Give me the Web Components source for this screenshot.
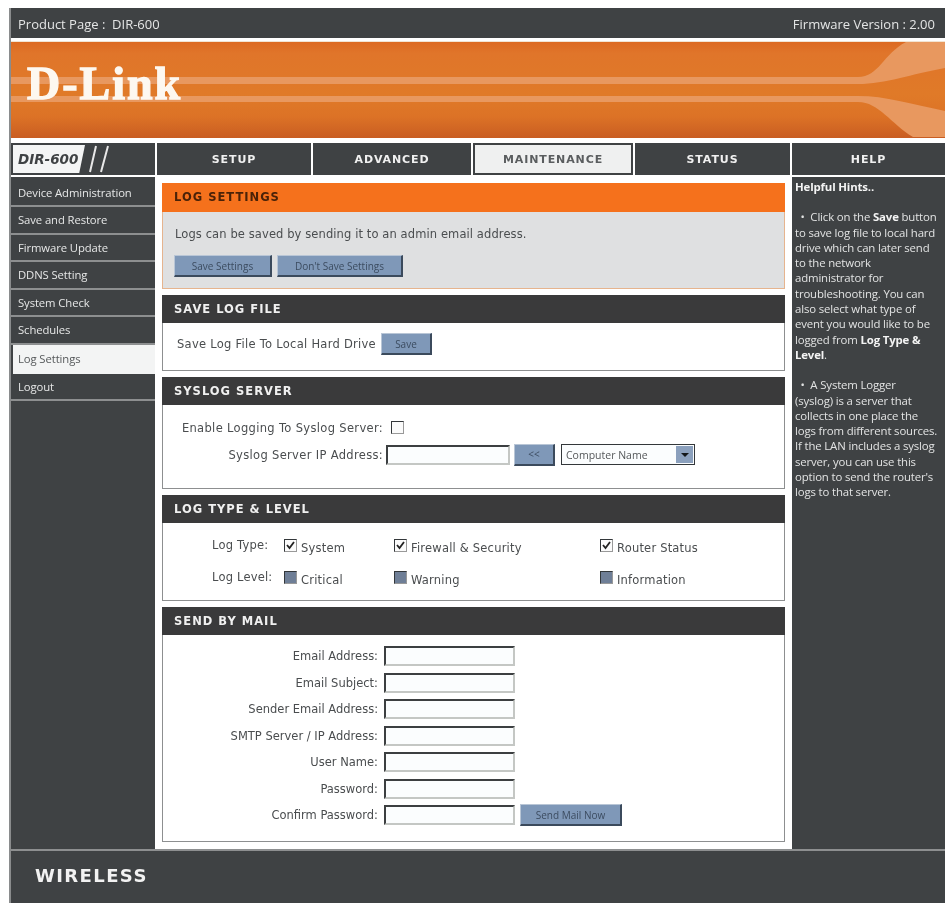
<!DOCTYPE html>
<html>
<head>
<meta charset="utf-8">
<title>D-Link DIR-600</title>
<style>
    html, body { margin: 0; padding: 0; background: #fff; }
    body { font-family: "DejaVu Sans", sans-serif; }
</style>
</head>
<body>
<dl-page>
    <dl-topbar slot="top" product="Product Page :  DIR-600" firmware="Firmware Version : 2.00"></dl-topbar>
    <dl-banner slot="top"></dl-banner>
    <dl-tabs slot="top" active="MAINTENANCE"></dl-tabs>

    <dl-sidenav slot="nav" active="Log Settings"></dl-sidenav>

    <dl-card title="LOG SETTINGS" tone="orange" height="106">
        <div style="font:11.5px 'DejaVu Sans',sans-serif;color:#4a4d4f;padding:15px 0 0 12px;letter-spacing:.1px">Logs can be saved by sending it to an admin email address.</div>
        <div style="display:flex;gap:5px;padding:14px 0 0 11px">
            <dl-button width="98">Save Settings</dl-button>
            <dl-button width="126">Don't Save Settings</dl-button>
        </div>
    </dl-card>

    <dl-card title="SAVE LOG FILE" height="76">
        <div style="display:flex;align-items:center;gap:5px;padding:10px 0 0 14px;font-size:11.5px;color:#4a4d4f;letter-spacing:.27px">
            <span>Save Log File To Local Hard Drive</span>
            <dl-button width="51">Save</dl-button>
        </div>
    </dl-card>

    <dl-card title="SYSLOG SERVER" height="112">
        <div style="padding-top:11px">
            <dl-field label="Enable Logging To Syslog Server:" label-width="223" height="23" style="letter-spacing:.33px"><dl-check style="margin-left:5px"></dl-check></dl-field>
            <dl-field label="Syslog Server IP Address:" label-width="223" height="31" style="letter-spacing:.33px">
                <dl-input width="124"></dl-input>
                <dl-button width="41" style="margin-left:-1px">&lt;&lt;</dl-button>
                <dl-select width="134">Computer Name</dl-select>
            </dl-field>
        </div>
    </dl-card>

    <dl-card title="LOG TYPE &amp; LEVEL" height="106">
        <dl-log-grid></dl-log-grid>
    </dl-card>

    <dl-card title="SEND BY MAIL" height="235">
        <div style="padding-top:8px">
            <dl-field label="Email Address:" label-width="221" height="26.5"><dl-input width="131"></dl-input></dl-field>
            <dl-field label="Email Subject:" label-width="221" height="26.5"><dl-input width="131"></dl-input></dl-field>
            <dl-field label="Sender Email Address:" label-width="221" height="26.5"><dl-input width="131"></dl-input></dl-field>
            <dl-field label="SMTP Server / IP Address:" label-width="221" height="26.5"><dl-input width="131"></dl-input></dl-field>
            <dl-field label="User Name:" label-width="221" height="26.5"><dl-input width="131"></dl-input></dl-field>
            <dl-field label="Password:" label-width="221" height="26.5"><dl-input width="131"></dl-input></dl-field>
            <dl-field label="Confirm Password:" label-width="221" height="26.5">
                <dl-input width="131"></dl-input>
                <dl-button width="102">Send Mail Now</dl-button>
            </dl-field>
        </div>
    </dl-card>

    <dl-hints slot="hints"></dl-hints>
    <dl-footer slot="bottom"></dl-footer>
</dl-page>

<script>
// Page frame: three columns between the header rows and the footer
class DlPage extends HTMLElement {
    constructor() {
        super();
        this.attachShadow({ mode: 'open' });
        this.shadowRoot.innerHTML = `
        <style>
            :host {
                display: block;
                width: 936px;
                margin: 8px 0 0 9px;
                border-left: 2px solid #8a8c8d;
                box-sizing: border-box;
                background: #fff;
                filter: blur(.35px);
            }
            .columns {
                display: grid;
                grid-template-columns: 144px 637px 153px;
                height: 672px;
            }
            .main {
                display: flex;
                flex-direction: column;
                gap: 6px;
                padding: 6px 5px 0 5px;
                box-sizing: border-box;
                width: 633px;
                margin-left: 2px;
            }
            .hints { display: block; height: 100%; }
        </style>
        <slot name="top"></slot>
        <div class="columns">
            <slot name="nav"></slot>
            <div class="main"><slot></slot></div>
            <div class="hints"><slot name="hints"></slot></div>
        </div>
        <slot name="bottom"></slot>
        `;
    }
}

class DlTopbar extends HTMLElement {
    constructor() {
        super();
        this.attachShadow({ mode: 'open' });
        this.shadowRoot.innerHTML = `
        <style>
            :host {
                display: flex;
                justify-content: space-between;
                align-items: center;
                height: 30px;
                box-sizing: border-box;
                padding: 1px 10px 0 7px;
                background: #3f4244;
                color: #e4e5e5;
                font: 13px "Open Sans", "DejaVu Sans", sans-serif;
                white-space: pre;
            }
        </style>
        <span id="p"></span><span id="f"></span>
        `;
    }

    connectedCallback() {
        this.shadowRoot.getElementById('p').textContent = this.getAttribute('product');
        this.shadowRoot.getElementById('f').textContent = this.getAttribute('firmware');
    }
}

class DlBanner extends HTMLElement {
    constructor() {
        super();
        this.attachShadow({ mode: 'open' });
        this.shadowRoot.innerHTML = `
        <style>
            :host {
                display: block;
                position: relative;
                height: 96px;
                margin: 3px 0 5px;
                border-top: 1px solid #f2e4d2;
                overflow: hidden;
                background: linear-gradient(#dc6a22 0, #e0752a 12%, #e07a28 55%, #dc7226 78%, #c95d22 100%);
            }
            svg { position: absolute; inset: 0; width: 100%; height: 100%; }
            .logo {
                position: absolute;
                left: 16px;
                top: 15px;
                font: bold 46px "Liberation Serif", serif;
                color: #fdf8f0;
                letter-spacing: 2px;
                -webkit-text-stroke: 1.3px #fdf8f0;
            }
        </style>
        <svg viewBox="0 0 934 96" preserveAspectRatio="none">
            <path d="M0 35H847C868 35 872 12 895 0H934V26C900 32 875 42 847 42H0Z" fill="#e8985f"/>
            <path d="M0 54H847C875 54 900 62 934 69V95H902C880 82 868 60 847 60H0Z" fill="#e8985f"/>
        </svg>
        <div class="logo">D-Link</div>
        `;
    }
}

class DlTabs extends HTMLElement {
    constructor() {
        super();
        this.attachShadow({ mode: 'open' });
        const tabs = [['SETUP', 154], ['ADVANCED', 158], ['MAINTENANCE', 160], ['STATUS', 155], ['HELP', 153]];
        const cells = tabs.map(([name, w]) => {
            const cls = name === this.getAttribute('active') ? 'tab on' : 'tab';
            return `<div class="${cls}" style="width:${w}px">${name}</div>`;
        }).join('');
        this.shadowRoot.innerHTML = `
        <style>
            :host {
                display: flex;
                gap: 2px;
                height: 32px;
                margin-bottom: 2px;
            }
            .brand {
                width: 144px;
                background: #3f4244;
                display: flex;
                align-items: center;
                box-sizing: border-box;
                padding-left: 2px;
            }
            .model {
                width: 72px;
                height: 28px;
                background: #f4f5f5;
                color: #3f4244;
                font: italic bold 13.5px "DejaVu Sans", sans-serif;
                line-height: 28px;
                padding-left: 5px;
                box-sizing: border-box;
                clip-path: polygon(0 0, 100% 0, 92% 100%, 0 100%);
            }
            .tab {
                background: #3f4244;
                color: #f0f0f0;
                font: bold 11px "DejaVu Sans", sans-serif;
                letter-spacing: .9px;
                display: flex;
                align-items: center;
                justify-content: center;
                box-sizing: border-box;
            }
            .tab.on {
                background: #eff0f0;
                color: #5a5d5f;
                border: 2px solid #3f4244;
            }
        </style>
        <div class="brand">
            <div class="model">DIR-600</div>
            <svg width="26" height="30" viewBox="0 0 26 30" style="margin-left:3px"><path d="M2 28L8 2M13 28L20 2" stroke="#e8e8e8" stroke-width="2" fill="none"/></svg>
        </div>
        ${cells}
        `;
    }
}

class DlSidenav extends HTMLElement {
    constructor() {
        super();
        this.attachShadow({ mode: 'open' });
        const items = ['Device Administration', 'Save and Restore', 'Firmware Update', 'DDNS Setting', 'System Check', 'Schedules', 'Log Settings', 'Logout'];
        const rows = items.map(name => {
            const cls = name === this.getAttribute('active') ? 'item on' : 'item';
            return `<div class="${cls}">${name}</div>`;
        }).join('');
        this.shadowRoot.innerHTML = `
        <style>
            :host {
                display: block;
                height: 100%;
                padding-top: 2.5px;
                box-sizing: border-box;
                background: #3f4244;
                font: 11.3px "Open Sans", "DejaVu Sans", sans-serif;
                color: #e6e7e7;
            }
            .item {
                height: 27.5px;
                line-height: 25px;
                padding-left: 7px;
                box-sizing: border-box;
                border-bottom: 2px solid #8d8f90;
                letter-spacing: -.1px;
            }
            .item.on {
                background: #f3f4f4;
                color: #55585a;
                border-bottom: 0;
                border-left: 2px solid #3f4244;
                padding-left: 5px;
                height: 29px;
                line-height: 28px;
            }
        </style>
        ${rows}
        `;
    }
}

class DlCard extends HTMLElement {
    constructor() {
        super();
        this.attachShadow({ mode: 'open' });
    }

    connectedCallback() {
        const orange = this.getAttribute('tone') === 'orange';
        this.shadowRoot.innerHTML = `
        <style>
            :host {
                display: block;
                box-sizing: border-box;
                height: ${this.getAttribute('height')}px;
                border: 1px solid ${orange ? '#e6b48e' : '#8d8f90'};
                border-top: 0;
                background: ${orange ? '#dfe0e1' : '#fff'};
                font-family: "DejaVu Sans", sans-serif;
                color: #444;
            }
            h2 {
                margin: 0 -1px;
                height: ${orange ? 29 : 28}px;
                padding-left: 12px;
                font: bold 11.5px/29px "DejaVu Sans", sans-serif;
                letter-spacing: 1px;
                background: ${orange ? '#f5711c' : '#3a3a3b'};
                color: ${orange ? '#4a2208' : '#f0f0f0'};
            }
        </style>
        <h2>${this.getAttribute('title').replace('&', '&amp;')}</h2>
        <slot></slot>
        `;
        this.removeAttribute('title');
    }
}

class DlButton extends HTMLElement {
    constructor() {
        super();
        this.attachShadow({ mode: 'open' });
    }

    connectedCallback() {
        this.shadowRoot.innerHTML = `
        <style>
            :host {
                display: inline-flex;
                align-items: center;
                justify-content: center;
                box-sizing: border-box;
                width: ${this.getAttribute('width')}px;
                height: 22px;
                background: #7f98b8;
                border-right: 2px solid #3b4a5c;
                border-bottom: 2px solid #3b4a5c;
                border-top: 1px solid #b9c6d6;
                border-left: 1px solid #b9c6d6;
                color: #3c4c60;
                font: 10px "Open Sans", "DejaVu Sans", sans-serif;
                letter-spacing: 0;
                white-space: nowrap;
                flex: none;
            }
        </style>
        <slot></slot>
        `;
    }
}

class DlInput extends HTMLElement {
    constructor() {
        super();
        this.attachShadow({ mode: 'open' });
    }

    connectedCallback() {
        this.shadowRoot.innerHTML = `
        <style>
            :host {
                display: inline-block;
                box-sizing: border-box;
                width: ${this.getAttribute('width')}px;
                height: 20px;
                background: #fbfdfe;
                border: 2px solid;
                border-color: #3c3f41 #c4c7c4 #c4c7c4 #3c3f41;
                flex: none;
            }
        </style>
        `;
    }
}

class DlSelect extends HTMLElement {
    constructor() {
        super();
        this.attachShadow({ mode: 'open' });
    }

    connectedCallback() {
        this.shadowRoot.innerHTML = `
        <style>
            :host {
                display: inline-flex;
                align-items: center;
                justify-content: space-between;
                box-sizing: border-box;
                width: ${this.getAttribute('width')}px;
                height: 21px;
                margin-left: 1px;
                background: #fbfdfe;
                border: 1px solid #33373a;
                padding-left: 4px;
                font: 10.5px "Open Sans", "DejaVu Sans", sans-serif;
                letter-spacing: 0;
                color: #55585a;
                flex: none;
            }
            i {
                width: 17px;
                height: 17px;
                margin-right: 1px;
                background: #8ba0bd;
                display: flex;
                align-items: center;
                justify-content: center;
            }
            i::after {
                content: '';
                border: 4px solid transparent;
                border-top: 4px solid #14171a;
                border-bottom: 0;
            }
        </style>
        <span><slot></slot></span><i></i>
        `;
    }
}

class DlCheck extends HTMLElement {
    constructor() {
        super();
        this.attachShadow({ mode: 'open' });
    }

    connectedCallback() {
        const kind = this.getAttribute('kind') || 'empty';
        const mark = kind === 'checked'
            ? '<svg width="9" height="9" viewBox="0 0 9 9"><path d="M1 4l2.5 3L8 1" stroke="#222" stroke-width="1.8" fill="none"/></svg>'
            : '';
        this.shadowRoot.innerHTML = `
        <style>
            :host {
                display: inline-flex;
                align-items: center;
                justify-content: center;
                box-sizing: border-box;
                width: 13px;
                height: 13px;
                border: 1px solid #33373a;
                border-right-color: #999;
                border-bottom-color: #999;
                background: ${kind === 'level' ? '#6f7f97' : '#fbfbfb'};
                flex: none;
            }
        </style>
        ${mark}
        `;
    }
}

// Right-aligned label followed by its controls
class DlField extends HTMLElement {
    constructor() {
        super();
        this.attachShadow({ mode: 'open' });
    }

    connectedCallback() {
        const syslog = this.getAttribute('label-width') === '223';
        this.shadowRoot.innerHTML = `
        <style>
            :host {
                display: flex;
                align-items: center;
                height: ${this.getAttribute('height')}px;
                font: 11.5px "DejaVu Sans", sans-serif;
                color: #4a4d4f;
            }
            label {
                width: ${this.getAttribute('label-width')}px;
                text-align: right;
                padding-right: ${syslog ? 3 : 6}px;
                box-sizing: border-box;
                flex: none;
                white-space: nowrap;
            }
            .controls { display: flex; align-items: center; gap: 5px; }
        </style>
        <label>${this.getAttribute('label')}</label>
        <div class="controls"><slot></slot></div>
        `;
    }
}

class DlLogGrid extends HTMLElement {
    constructor() {
        super();
        this.attachShadow({ mode: 'open' });
        const cell = (kind, text) => `<div class="cell"><dl-check kind="${kind}"></dl-check><span>${text}</span></div>`;
        this.shadowRoot.innerHTML = `
        <style>
            :host {
                display: grid;
                grid-template-columns: 121px 110px 206px 1fr;
                grid-auto-rows: 32px;
                padding-top: 6px;
                font: 11.5px "DejaVu Sans", sans-serif;
                letter-spacing: .2px;
                color: #4a4d4f;
                align-items: center;
            }
            .label { padding-left: 49px; white-space: nowrap; box-sizing: border-box; }
            .cell { display: flex; align-items: center; gap: 4px; }
            .cell span { position: relative; top: 3px; }
        </style>
        <div class="label">Log Type:</div>
        ${cell('checked', 'System')}${cell('checked', 'Firewall &amp; Security')}${cell('checked', 'Router Status')}
        <div class="label">Log Level:</div>
        ${cell('level', 'Critical')}${cell('level', 'Warning')}${cell('level', 'Information')}
        `;
    }
}

class DlHints extends HTMLElement {
    constructor() {
        super();
        this.attachShadow({ mode: 'open' });
        this.shadowRoot.innerHTML = `
        <style>
            :host {
                display: block;
                height: 100%;
                background: #3f4244;
                color: #e2e3e3;
                font: 11.4px/15.3px "Open Sans", "DejaVu Sans", sans-serif;
                padding: 2px 0 0 3px;
                box-sizing: border-box;
                letter-spacing: -.15px;
                white-space: nowrap;
            }
            p { margin: 0 0 15px; }
            b { color: #f4f4f4; }
        </style>
        <p><b>Helpful Hints..</b></p>
        <p>&nbsp;&nbsp;•&nbsp; Click on the <b>Save</b> button<br>to save log file to local hard<br>drive which can later send<br>to the network<br>administrator for<br>troubleshooting. You can<br>also select what type of<br>event you would like to be<br>logged from <b>Log Type &amp;<br>Level</b>.</p>
        <p>&nbsp;&nbsp;•&nbsp; A System Logger<br>(syslog) is a server that<br>collects in one place the<br>logs from different sources.<br>If the LAN includes a syslog<br>server, you can use this<br>option to send the router's<br>logs to that server.</p>
        `;
    }
}

class DlFooter extends HTMLElement {
    constructor() {
        super();
        this.attachShadow({ mode: 'open' });
        this.shadowRoot.innerHTML = `
        <style>
            :host {
                display: flex;
                align-items: center;
                height: 54px;
                border-top: 2px solid #8d8f90;
                box-sizing: border-box;
                padding: 0 0 4px 24px;
                background: #3f4244;
                color: #f2f2f2;
                font: bold 18px "DejaVu Sans", sans-serif;
                letter-spacing: 1.4px;
            }
        </style>
        WIRELESS
        `;
    }
}

customElements.define('dl-page', DlPage);
customElements.define('dl-topbar', DlTopbar);
customElements.define('dl-banner', DlBanner);
customElements.define('dl-tabs', DlTabs);
customElements.define('dl-sidenav', DlSidenav);
customElements.define('dl-card', DlCard);
customElements.define('dl-button', DlButton);
customElements.define('dl-input', DlInput);
customElements.define('dl-select', DlSelect);
customElements.define('dl-check', DlCheck);
customElements.define('dl-field', DlField);
customElements.define('dl-log-grid', DlLogGrid);
customElements.define('dl-hints', DlHints);
customElements.define('dl-footer', DlFooter);
</script>
</body>
</html>
